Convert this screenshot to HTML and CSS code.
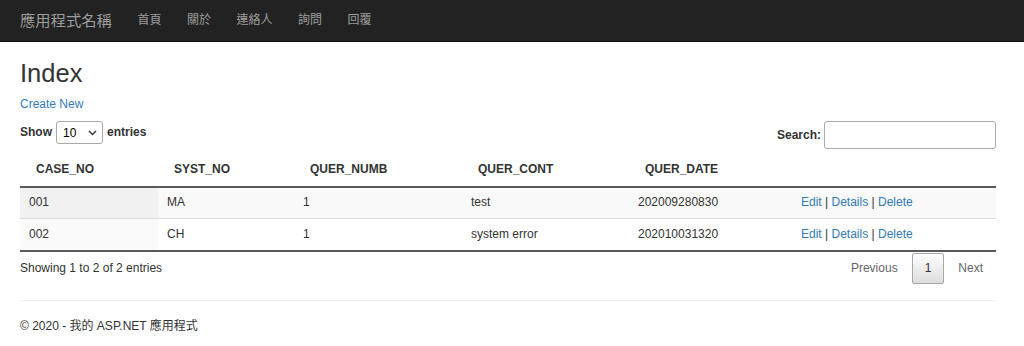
FILE: index.html
```html
<!DOCTYPE html>
<html lang="zh-Hant">
<head>
    <meta charset="UTF-8">
    <meta name="viewport" content="width=device-width, initial-scale=1.0">
    <title>Index - 我的 ASP.NET 應用程式</title>
    <link rel="stylesheet" href="styles.css">
</head>
<body>
    <nav class="navbar">
        <a class="navbar-brand" href="#">應用程式名稱</a>
        <ul class="nav-links">
            <li><a href="#">首頁</a></li>
            <li><a href="#">關於</a></li>
            <li><a href="#">連絡人</a></li>
            <li><a href="#">詢問</a></li>
            <li><a href="#">回覆</a></li>
        </ul>
    </nav>

    <div class="body-content">
        <h2>Index</h2>
        <p class="create-link"><a href="#">Create New</a></p>

        <div class="dt-wrapper">
            <div class="dt-top">
                <label class="dt-length">
                    Show
                    <span class="select-box">
                        <select>
                            <option>10</option>
                            <option>25</option>
                            <option>50</option>
                            <option>100</option>
                        </select>
                        <svg class="select-arrow" width="9" height="6" viewBox="0 0 9 6">
                            <path d="M1 1 L4.5 4.5 L8 1" fill="none" stroke="#333" stroke-width="1.4"/>
                        </svg>
                    </span>
                    entries
                </label>
                <label class="dt-filter">
                    Search:
                    <input type="search">
                </label>
            </div>

            <table class="data-table">
                <colgroup>
                    <col style="width: 138px">
                    <col style="width: 136px">
                    <col style="width: 168px">
                    <col style="width: 167px">
                    <col style="width: 163px">
                    <col style="width: 204px">
                </colgroup>
                <thead>
                    <tr>
                        <th>CASE_NO</th>
                        <th>SYST_NO</th>
                        <th>QUER_NUMB</th>
                        <th>QUER_CONT</th>
                        <th>QUER_DATE</th>
                        <th></th>
                    </tr>
                </thead>
                <tbody>
                    <tr class="odd">
                        <td class="sorting-1">001</td>
                        <td>MA</td>
                        <td>1</td>
                        <td>test</td>
                        <td>202009280830</td>
                        <td><a href="#">Edit</a> | <a href="#">Details</a> | <a href="#">Delete</a></td>
                    </tr>
                    <tr class="even">
                        <td class="sorting-1">002</td>
                        <td>CH</td>
                        <td>1</td>
                        <td>system error</td>
                        <td>202010031320</td>
                        <td><a href="#">Edit</a> | <a href="#">Details</a> | <a href="#">Delete</a></td>
                    </tr>
                </tbody>
            </table>

            <div class="dt-bottom">
                <div class="dt-info">Showing 1 to 2 of 2 entries</div>
                <div class="dt-paginate">
                    <a class="page-btn disabled" href="#">Previous</a>
                    <a class="page-btn current" href="#">1</a>
                    <a class="page-btn disabled" href="#">Next</a>
                </div>
            </div>
        </div>

        <hr>
        <footer>
            <p>&copy; 2020 - 我的 ASP.NET 應用程式</p>
        </footer>
    </div>
</body>
</html>
```

FILE: styles.css
```css
body {
    margin: 0;
    padding: 0;
    font-family: "Liberation Sans", Arial, "Noto Sans CJK TC", sans-serif;
    font-size: 12px;
    line-height: 17px;
    color: #333;
    background-color: #fff;
}

*, *::before, *::after {
    box-sizing: border-box;
}

a {
    color: #337ab7;
    text-decoration: none;
}

/* navbar */
.navbar {
    display: flex;
    align-items: center;
    height: 42px;
    padding: 0 20px;
    background-color: #222;
    border-bottom: 1px solid #080808;
}

.navbar-brand {
    font-size: 15.3px;
    color: #9d9d9d;
    padding-right: 13px;
}

.nav-links {
    display: flex;
    list-style: none;
    margin: 0;
    padding: 0;
}

.nav-links a {
    display: block;
    padding: 0 12.75px;
    font-size: 12px;
    color: #9d9d9d;
}

/* content */
.body-content {
    width: 976px;
    margin-left: 20px;
}

h2 {
    margin: 17px 0 8.5px;
    font-size: 25.5px;
    font-weight: 500;
    line-height: 28px;
    color: #333;
}

.create-link {
    margin: 0 0 8.5px;
}

/* datatable controls */
.dt-top {
    display: flex;
    justify-content: space-between;
    align-items: flex-start;
    height: 31px;
}

.dt-top label {
    display: flex;
    align-items: center;
    font-weight: bold;
}

.dt-length {
    height: 23px;
}

.select-box {
    position: relative;
    display: inline-block;
    margin: 0 4px;
}

.select-box select {
    appearance: none;
    -webkit-appearance: none;
    width: 47px;
    height: 23px;
    padding: 0 0 0 6px;
    font-family: inherit;
    font-size: 12px;
    color: #000;
    background-color: #fff;
    border: 1px solid #aaa;
    border-radius: 3px;
}

.select-arrow {
    position: absolute;
    right: 6px;
    top: 9px;
    pointer-events: none;
}

.dt-filter {
    height: 28px;
}

.dt-filter input {
    width: 172px;
    height: 28px;
    margin-left: 3px;
    padding: 4px;
    border: 1px solid #aaa;
    border-radius: 3px;
    background-color: #fff;
}

/* table */
.data-table {
    width: 100%;
    table-layout: fixed;
    border-collapse: collapse;
    border-spacing: 0;
    border-bottom: 2px solid #5a5a5a;
}

.data-table th {
    padding: 9px 16px 8px;
    text-align: left;
    font-weight: bold;
    color: #333;
    border-bottom: 2px solid #5a5a5a;
}

.data-table td {
    padding: 7px 9px;
    line-height: 17px;
}

.data-table tbody tr.odd td {
    padding-top: 6px;
}

.data-table tbody tr.even td {
    border-top: 1px solid #ddd;
}

.data-table tr.odd td {
    background-color: #f9f9f9;
}

.data-table tr.odd td.sorting-1 {
    background-color: #f1f1f1;
}

.data-table tr.even td.sorting-1 {
    background-color: #fafafa;
}

/* info and paging */
.dt-bottom {
    display: flex;
    justify-content: space-between;
    align-items: center;
    padding-top: 1px;
}

.dt-paginate {
    display: flex;
}

.page-btn {
    display: block;
    padding: 6px 12px;
    margin-left: 1px;
    line-height: 17px;
    color: #666;
    border: 1px solid transparent;
    border-radius: 2px;
}

.page-btn.current {
    color: #333;
    border-color: #a8a8a8;
    background: linear-gradient(to bottom, #fff 0%, #dcdcdc 100%);
}

hr {
    margin: 16px 0 17px;
    border: 0;
    border-top: 1px solid #eee;
}

footer p {
    margin: 0 0 8.5px;
}
```
